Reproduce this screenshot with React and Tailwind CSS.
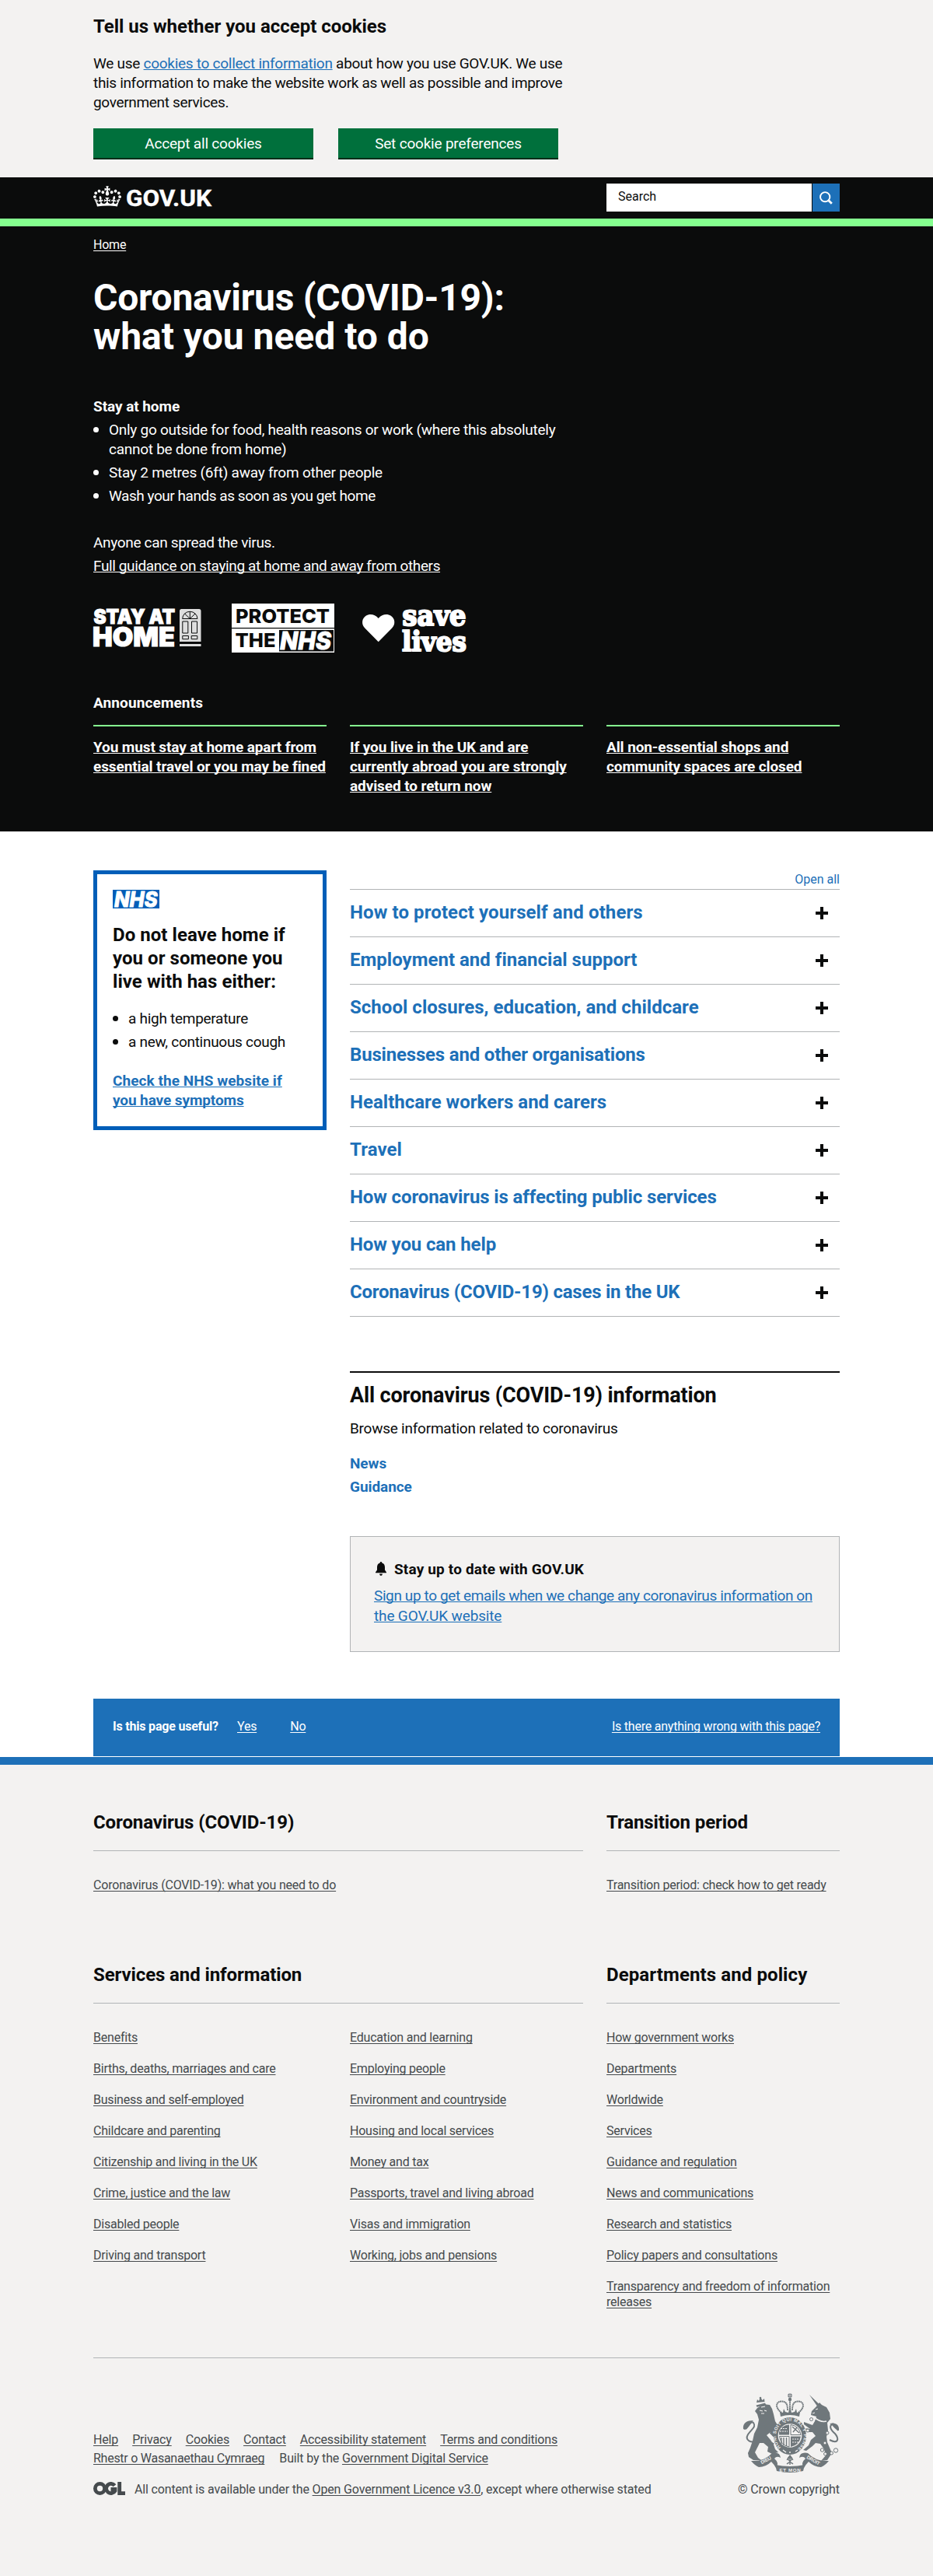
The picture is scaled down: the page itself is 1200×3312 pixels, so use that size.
import React from "react";

const ul = "underline decoration-1 [text-decoration-skip-ink:none]";
const body = "text-[19px] leading-[25px] tracking-[-0.33px]";
const bodyBold = "text-[19px] leading-[25px] font-bold tracking-[-0.06px]";
const small = "text-[16px] leading-[20px] tracking-[-0.22px]";
const footLink = "underline decoration-1 underline-offset-2 [text-decoration-skip-ink:none]";

function Crown() {
  return (
    <svg className="mt-[11px] h-[27px] w-[36px]" viewBox="0 0 132 97" fill="currentColor">
      <path d="M25 30.2c3.5 1.5 7.7-.2 9.1-3.7 1.5-3.6-.2-7.8-3.9-9.2-3.6-1.4-7.6.3-9.1 3.9-1.4 3.5.3 7.5 3.9 9zM9 39.5c3.6 1.5 7.8-.2 9.2-3.7 1.5-3.6-.2-7.8-3.9-9.1-3.6-1.5-7.6.2-9.1 3.8-1.4 3.5.3 7.5 3.8 9zM4.4 57.2c3.5 1.5 7.7-.2 9.1-3.8 1.5-3.6-.2-7.7-3.9-9.1-3.5-1.5-7.6.3-9.1 3.8-1.4 3.5.3 7.6 3.9 9.1zm38.3-21.4c3.5 1.5 7.7-.2 9.1-3.8 1.5-3.6-.2-7.7-3.9-9.1-3.6-1.5-7.6.3-9.1 3.8-1.3 3.6.4 7.7 3.9 9.1zm64.4-5.6c-3.6 1.5-7.8-.2-9.1-3.7-1.5-3.6.2-7.8 3.8-9.2 3.6-1.4 7.7.3 9.2 3.9 1.3 3.5-.4 7.5-3.9 9zm15.9 9.3c-3.6 1.5-7.7-.2-9.1-3.7-1.5-3.6.2-7.8 3.7-9.1 3.6-1.5 7.7.2 9.2 3.8 1.5 3.5-.3 7.5-3.8 9zm4.7 17.7c-3.6 1.5-7.8-.2-9.2-3.8-1.5-3.6.2-7.7 3.9-9.1 3.6-1.5 7.7.3 9.2 3.8 1.3 3.5-.4 7.6-3.9 9.1zM89.3 35.8c-3.6 1.5-7.8-.2-9.2-3.8-1.4-3.6.2-7.7 3.9-9.1 3.6-1.5 7.7.3 9.2 3.8 1.4 3.6-.3 7.7-3.9 9.1zM69.7 17.7l8.9 4.7V9.3l-8.9 2.8c-.2-.3-.5-.6-.9-.9L72.4 0H59.6l3.5 11.2c-.3.3-.6.5-.9.9l-8.8-2.8v13.1l8.8-4.7c.3.3.6.7.9.9l-5 15.4v.1c-.2.8-.4 1.6-.4 2.4 0 4.1 3.1 7.5 7 8.1h.2c.3 0 .7.1 1 .1.4 0 .7 0 1-.1h.2c4-.6 7.1-4.1 7.1-8.1 0-.8-.1-1.7-.4-2.4V34l-5.1-15.4c.4-.2.7-.6 1-.9zM66 92.8c16.9 0 32.8 1.1 47.1 3.2 4-16.9 8.9-26.7 14-33.5l-9.6-3.4c1 4.9 1.1 7.2 0 10.2-1.5-1.4-3-4.3-4.2-8.7L108.6 76c2.8-2 5-3.2 7.5-3.3-4.4 9.4-10 11.9-13.6 11.2-4.3-.8-6.3-4.6-5.6-7.9 1-4.7 5.7-5.9 8-.5 4.3-8.7-3-11.4-7.6-8.8 7.1-7.2 7.9-13.5 2.1-21.1-8 6.1-8.1 12.3-4.5 20.8-4.7-5.4-12.1-2.5-9.5 6.2 3.4-5.2 7.9-2 7.2 3.1-.6 4.3-6.4 7.8-13.5 7.2-10.3-.9-10.9-8-11.2-13.8 2.5-.5 7.1 1.8 11 7.3L80.2 60c-4.1 4.4-8 5.3-12.3 5.4 1.4-4.4 8-11.6 8-11.6H55.5s6.4 7.2 7.9 11.6c-4.2-.1-8-1-12.3-5.4l1.4 16.4c3.9-5.5 8.5-7.7 10.9-7.3-.3 5.8-.9 12.8-11.1 13.8-7.2.6-12.9-2.9-13.5-7.2-.7-5 3.8-8.3 7.1-3.1 2.7-8.7-4.6-11.6-9.4-6.2 3.7-8.5 3.6-14.7-4.6-20.8-5.8 7.6-5 13.9 2.2 21.1-4.7-2.6-11.9.1-7.7 8.8 2.3-5.5 7.1-4.2 8.1.5.7 3.3-1.3 7.1-5.7 7.9-3.5.7-9-1.8-13.5-11.2 2.5.1 4.7 1.3 7.5 3.3l-4.7-15.4c-1.2 4.4-2.7 7.2-4.3 8.7-1.1-3-.9-5.3 0-10.2l-9.5 3.4c5 6.9 9.9 16.7 14 33.5 14.8-2.1 30.8-3.2 47.7-3.2z" />
    </svg>
  );
}

function StayAtHome() {
  return (
    <svg className="mt-[7px] h-[48px] w-[139px] overflow-visible" viewBox="0 0 139 48" fontFamily="Inter, sans-serif" fontWeight="900">
      <g fill="#fff" stroke="#fff" strokeWidth="1.1">
        <text x="0.5" y="19" fontSize="25.5" textLength="104.5" lengthAdjust="spacingAndGlyphs">STAY AT</text>
        <text x="-1" y="47.700" fontSize="34" textLength="106" lengthAdjust="spacingAndGlyphs">HOME</text>
      </g>
      <path d="M111 42V2.5Q111 0 113.5 0H136Q138.5 0 138.5 2.5V42ZM111 45h27.5v3H111Z" fill="#dedede" />
      <g fill="none" stroke="#0b0c0c" strokeWidth="1">
        <path d="M114.7 12.5a9.6 9.2 0 0 1 19.2 0ZM124.3 3.5v9M124.3 12.5 117.5 6M124.3 12.5 131 6" />
        <path d="M114.8 16h7v15h-7zM126.5 16h7v15h-7zM114.8 34.5h7.6v4.2h-7.6zM126.2 34.5h7.6v4.2h-7.6z" />
      </g>
    </svg>
  );
}

function ProtectNhs() {
  return (
    <svg className="ml-[39px] h-[63px] w-[132px]" viewBox="0 0 132 63" fontFamily="Inter, sans-serif" fontWeight="800">
      <path d="M0 0h132v63H0z" fill="#fff" />
      <path d="M0 31h132v1.2H0zM61 34h70v27.6H61z" fill="#0b0c0c" />
      <g fill="#0b0c0c">
        <text x="5" y="24.7" fontSize="25" textLength="121" lengthAdjust="spacingAndGlyphs">PROTECT</text>
        <text x="4.5" y="56" fontSize="25" textLength="52" lengthAdjust="spacingAndGlyphs">THE</text>
      </g>
      <text x="62" y="59" fontSize="31.5" fontStyle="italic" fill="#fff" stroke="#fff" strokeWidth="0.9" textLength="66" lengthAdjust="spacingAndGlyphs">NHS</text>
    </svg>
  );
}

function SaveLives() {
  return (
    <svg className="ml-[36px] mt-[5px] h-[58px] w-[135px] overflow-visible" viewBox="0 0 135 58">
      <path d="M20.700 44.200 3.200 26.600C-1.600 21.400-.6 14 4.600 10.700 9.600 7.600 16.400 8.800 20.700 14 25 8.800 31.800 7.600 36.800 10.700 42 14 43 21.400 38.200 26.600Z" fill="#fff" />
      <g fill="#fff" stroke="#fff" strokeWidth="2.200" strokeLinejoin="round" fontFamily="'DejaVu Serif', serif" fontWeight="700">
        <text x="51.500" y="22.800" fontSize="37.500" textLength="82" lengthAdjust="spacingAndGlyphs">save</text>
        <text x="51" y="56" fontSize="36" textLength="83" lengthAdjust="spacingAndGlyphs">lives</text>
      </g>
    </svg>
  );
}

function NhsLogo() {
  return (
    <svg className="h-[24px] w-[60px]" viewBox="0 0 60 24">
      <path d="M0 0h60v24H0z" fill="#005eb8" />
      <text x="2" y="21.800" fontSize="27" fontFamily="Inter, sans-serif" fontWeight="800" fontStyle="italic" fill="#fff" stroke="#fff" strokeWidth="0.9" textLength="55.500" lengthAdjust="spacingAndGlyphs">NHS</text>
    </svg>
  );
}

function Crest() {
  const g = "#6f777b";
  const l = "#f3f2f1";
  return (
    <svg className="h-[102px] w-[125px] overflow-visible" viewBox="0 0 125 102">
      <defs>
        <path id="garter" d="M61 74.500A18 19.500 0 1 1 61.100 74.500" />
      </defs>
      {/* tails */}
      <path d="M22 60C10 66 3 60 7 53 12 46 18 43 14 38 11 35 8 42 4 46" fill="none" stroke={g} strokeWidth="2" />
      <path d="M1 46C0 38 6 35 14 35 10 38 9 44 3 47Z" fill={g} />
      <path d="M112 60C124 66 124 58 119 52 112 46 112 42 115 40 118 38 120 44 123 48" fill="none" stroke={g} strokeWidth="2" />
      <path d="M124 48C125 41 120 37 112 39 117 41 117 46 124 48Z" fill={g} />
      {/* lion */}
      <path d="M17.500 15.500 29 12.500l1.300 2.500-11.800 2.800ZM18 12l1-4 2 2 2-5 2.500 4 2.500-2 .5 4Z" fill={g} />
      <circle cx="23" cy="6" r="1.300" fill={g} />
      <path d="M19 19 27 14 35 15 38 20 40 27 42 36 47 44 44 46 49 52 43 52 46 58 40 57 36 50 31 54 36 60 40 66 42 72 46 76 38 78 32 75 33 69 27 64 22 64 19 70 16 76 20 83 24 86 14 86 8 82 7 77 10 70 13 61 15 52 19 44 21 34 19 27 16 23Z" fill={g} />
      <path d="m24 18 5-1M22 22l4 1M28 22l3 1M24 26h4" stroke={l} strokeWidth="1.100" />
      <path d="m46 44-6-6M36 50l9 9M40 66l-8-4M15 75l-7 3" stroke={g} strokeWidth="3.500" fill="none" />
      {/* unicorn */}
      <path d="M86 2 98.500 14 96 16.500Z" fill={g} />
      <path d="M95 17 99 12 102 15 108 18 112 25 113 33 109 38 110 48 108 56 109 63 112 70 115 77 109 86 101 87 107 80 105 72 100 65 94 64 90 68 82 74 78 73 85 67 88 60 94 55 90 50 84 50 80 45 87 46 79 40 79 37 90 41 93 36 95 30 88 28 89 23Z" fill={g} />
      <path d="M92 31q9 7 16 5" fill="none" stroke={l} strokeWidth="1.600" />
      <path d="m94 21 3-1M90 26l3-1" stroke={l} strokeWidth="1" />
      <g fill={l} stroke={g} strokeWidth="1">
        <circle cx="88.500" cy="33.500" r="2" />
        <circle cx="84" cy="48" r="2" />
        <circle cx="109" cy="51" r="2" />
        <circle cx="106" cy="64" r="2" />
        <circle cx="102.500" cy="73" r="2.200" />
        <circle cx="106.500" cy="78" r="2" />
        <circle cx="114.500" cy="77" r="2" />
        <circle cx="120" cy="73.500" r="2.700" />
      </g>
      {/* crown */}
      <circle cx="61" cy="3" r="2.800" fill={g} />
      <path d="M61 0v8M58 3h6" stroke={l} strokeWidth="0.600" />
      <circle cx="61" cy="8" r="2.200" fill={g} />
      <path d="M50 25C41 18 43 10 51 10.500 56 11 58 14 58 22M72 25C81 18 79 10 71 10.500 66 11 64 14 64 22M61 9V22" fill="none" stroke={g} strokeWidth="1.900" strokeDasharray="1.800 0.500" />
      <path d="M49 30 48 24 52 25 53 20 55 24 59 25 61 17 63 25 67 24 69 20 70 25 74 24 73 30Q61 26 49 30Z" fill={g} />
      {/* garter and shield */}
      <ellipse cx="61" cy="55" rx="21" ry="24" fill={g} />
      <text fill={l} fontFamily="'Liberation Sans', sans-serif" fontWeight="700" fontSize="5.800">
        <textPath href="#garter" startOffset="13" textLength="94">HONI SOIT QUI MAL Y PENSE</textPath>
      </text>
      <circle cx="61" cy="54.500" r="15.300" fill={l} />
      <path d="M47 53.500V50Q50 41 60 40.500V53.500ZM62 55.500H75Q73 67 62 69Z" fill={g} />
      <path d="M62 53.500V40.500Q73 42 75 53.500ZM60 55.500V69Q49 67 47.500 55.500Z" fill="none" stroke={g} strokeWidth="1" />
      <path d="m64 43 9 8M65 50l5-6M50 57v8M53 57v10M56.500 57v11" stroke={g} strokeWidth="1.400" />
      <path d="M49 45.500h9M48 49h10M64 59h9M64 63h8" stroke={l} strokeWidth="1.100" strokeDasharray="2 1" />
      <path d="m52 73 4 3M61 77v-2M68 75l3-2" stroke={l} strokeWidth="1.400" />
      {/* motto ribbon */}
      <path d="M61 80v12M57 86q4-6 8 0M57 91q4-4 8 0M61 80l3 4-3 4-3-4Z" fill="none" stroke={g} strokeWidth="1.300" />
      <path d="M11 87Q28 88 38 77 48 75 49 83 44 80 41 84 48 90 43 96 41 92 37 88 30 95 21 95 16 93 11 87Z" fill={g} />
      <path d="M111 87Q94 88 84 77 74 75 73 83 78 80 81 84 74 90 79 96 81 92 85 88 92 95 101 95 106 93 111 87Z" fill={g} />
      <path d="M42 92Q61 96 80 92L78 100Q61 104 44 100Z" fill={g} />
      <g fill={l} fontFamily="'Liberation Sans', sans-serif" fontWeight="700" fontSize="6.200" textAnchor="middle">
        <text transform="translate(31 88) rotate(-28)">DIEU</text>
        <text x="61" y="100.500" textLength="27">ET MON</text>
        <text transform="translate(90 88) rotate(30)">DROIT</text>
      </g>
    </svg>
  );
}

const announcements = [
  ["You must stay at home apart from", "essential travel or you may be fined"],
  ["If you live in the UK and are", "currently abroad you are strongly", "advised to return now"],
  ["All non-essential shops and", "community spaces are closed"],
];

const sections = [
  ["How to protect yourself and others", "tracking-[0.1px]"],
  ["Employment and financial support", "tracking-[0.01px]"],
  ["School closures, education, and childcare", "tracking-[0.03px]"],
  ["Businesses and other organisations", "tracking-[-0.18px]"],
  ["Healthcare workers and carers", "tracking-[0.01px]"],
  ["Travel", "tracking-[0.1px]"],
  ["How coronavirus is affecting public services", "tracking-[-0.12px]"],
  ["How you can help", "tracking-[-0.12px]"],
  ["Coronavirus (COVID-19) cases in the UK", "tracking-[-0.22px]"],
];

const services = [
  "Benefits", "Births, deaths, marriages and care", "Business and self-employed", "Childcare and parenting",
  "Citizenship and living in the UK", "Crime, justice and the law", "Disabled people", "Driving and transport",
];
const services2 = [
  "Education and learning", "Employing people", "Environment and countryside", "Housing and local services",
  "Money and tax", "Passports, travel and living abroad", "Visas and immigration", "Working, jobs and pensions",
];
const departments = [
  "How government works", "Departments", "Worldwide", "Services", "Guidance and regulation",
  "News and communications", "Research and statistics", "Policy papers and consultations",
  "Transparency and freedom of information releases",
];

function Bullets({ items }) {
  return (
    <ul className="flex flex-col gap-[5px] text-[19px] leading-[25px]">
      {items.map(([tracking, ...lines]) => (
        <li key={lines[0]} className={`flex items-start gap-[13px] ${tracking}`}>
          <span className="mt-[9px] size-[7px] shrink-0 rounded-full bg-current" />
          <span className="whitespace-nowrap">
            {lines.map((t) => <span key={t} className="block">{t}</span>)}
          </span>
        </li>
      ))}
    </ul>
  );
}

function FooterHeading({ children }) {
  return (
    <h2 className="h-[52px] border-b border-[#b1b4b6] text-[24px] leading-[30px] font-bold tracking-[-0.1px] text-[#0b0c0c]">
      {children}
    </h2>
  );
}

function LinkList({ items }) {
  return (
    <ul className="mt-[34px] flex w-[300px] flex-col gap-[20px]">
      {items.map((t) => <li key={t}><a href="#" className={footLink}>{t}</a></li>)}
    </ul>
  );
}

export default function App() {
  return (
    <div className="h-[3312px] w-[1200px] overflow-hidden bg-white font-['Roboto',sans-serif] text-[#0b0c0c]">
      <section className="h-[228px] bg-[#f3f2f1] px-[120px] pt-[19px]">
        <h2 className="text-[24px] leading-[30px] font-bold tracking-[-0.02px]">Tell us whether you accept cookies</h2>
        <p className="mt-5 text-[19px] leading-[25px] tracking-[-0.33px] whitespace-nowrap">
          <span className="tracking-[-0.27px]">We use <a href="#" className={`text-[#1d70b8] underline-offset-1 ${ul}`}>cookies to collect information</a> about how you use GOV.UK. We use</span>
          <br />this information to make the website work as well as possible and improve
          <br />government services.
        </p>
        <div className="mt-[21px] flex gap-[32px]">
          {["Accept all cookies", "Set cookie preferences"].map((t) => (
            <button key={t} className="h-[40px] w-[283px] border-b-2 border-[#002d18] bg-[#00703c] text-[19px] leading-[25px] tracking-[-0.2px] text-white">{t}</button>
          ))}
        </div>
      </section>

      <div className="bg-[#0b0c0c] text-white">
        <header className="flex h-[53px] justify-between px-[120px]">
          <a href="#" className="flex gap-[7px]">
            <Crown />
            <svg className="mt-[12px] h-[30px] w-[110px] overflow-visible" viewBox="0 0 110 30">
              <text x="-1" y="25.300" fontSize="30" fontWeight="700" fontFamily="Roboto, sans-serif" fill="currentColor" stroke="currentColor" strokeWidth="0.400" textLength="110" lengthAdjust="spacingAndGlyphs">GOV.UK</text>
            </svg>
          </a>
          <div className="mt-2 flex h-[36px] gap-px">
            <div className="w-[264px] bg-white pl-[15px] text-[16px] leading-[34px] text-[#0b0c0c]">Search</div>
            <button className="flex w-[35px] items-center justify-center bg-[#1d70b8]">
              <svg className="size-[17px]" viewBox="0 0 17 17" fill="none" stroke="#fff">
                <circle cx="7.200" cy="7.200" r="6.100" strokeWidth="1.900" />
                <path d="m11.500 11.500 4.300 4.300" strokeWidth="2.800" />
              </svg>
            </button>
          </div>
        </header>
        <div className="h-[10px] bg-[#85ff8f]" />

        <div className="h-[778px] px-[120px] pt-[14px]">
          <a href="#" className={`block w-fit ${small} ${footLink}`}>Home</a>
          <h1 className="mt-[33px] text-[48px] leading-[50px] font-bold tracking-[-0.25px]">
            Coronavirus (COVID-19):<br /><span className="tracking-[-0.02px]">what you need to do</span>
          </h1>
          <h2 className={`mt-[52px] ${bodyBold}`}>Stay at home</h2>
          <div className="mt-[5px]">
            <Bullets
              items={[
                ["tracking-[-0.27px]", "Only go outside for food, health reasons or work (where this absolutely", "cannot be done from home)"],
                ["tracking-[-0.22px]", "Stay 2 metres (6ft) away from other people"],
                ["tracking-[-0.46px]", "Wash your hands as soon as you get home"],
              ]}
            />
          </div>
          <p className={`mt-[35px] ${body}`}>Anyone can spread the virus.</p>
          <p className="mt-[5px] text-[19px] leading-[25px] tracking-[-0.38px]">
            <a href="#" className={`underline-offset-1 ${ul}`}>Full guidance on staying at home and away from others</a>
          </p>
          <div className="mt-[36px] flex items-start">
            <StayAtHome />
            <ProtectNhs />
            <SaveLives />
          </div>
          <h2 className="mt-[52px] text-[19px] leading-[25px] font-bold tracking-[0.12px]">Announcements</h2>
          <div className="mt-[16px] grid grid-cols-3 gap-[30px]">
            {announcements.map((lines) => (
              <a key={lines[0]} href="#" className="border-t-2 border-[#85ff8f] pt-[14px] text-[19px] leading-[25px] font-bold tracking-[-0.1px] whitespace-nowrap">
                {lines.map((t) => <span key={t} className={`block w-fit underline-offset-1 ${ul}`}>{t}</span>)}
              </a>
            ))}
          </div>
        </div>
      </div>

      <main className="flex h-[1115px] items-start gap-[30px] px-[120px] pt-[50px]">
        <aside className="h-[334px] w-[300px] shrink-0 border-[5px] border-[#005eb8] px-[20px] pt-[20px]">
          <NhsLogo />
          <h2 className="mt-[19px] text-[24px] leading-[30px] font-bold tracking-[0.05px]">
            Do not leave home if<br />you or someone you<br />live with has either:
          </h2>
          <div className="mt-[20px]">
            <Bullets items={[["tracking-[-0.28px]", "a high temperature"], ["tracking-[-0.28px]", "a new, continuous cough"]]} />
          </div>
          <a href="#" className={`mt-[25px] block text-[19px] leading-[25px] font-bold tracking-[0.06px] text-[#1d70b8] underline-offset-1 ${ul}`}>
            Check the NHS website if<br /><span className="tracking-[-0.1px]">you have symptoms</span>
          </a>
        </aside>

        <div className="w-[630px]">
          <div className="pt-[2px] pb-[2px] text-right text-[16px] leading-[20px] text-[#1d70b8]">Open all</div>
          <div className="border-b border-[#b1b4b6]">
            {sections.map(([t, tracking]) => (
              <div key={t} className="flex h-[61px] justify-between border-t border-[#b1b4b6] pr-[15px]">
                <h3 className={`pt-[14px] text-[24px] leading-[30px] font-bold text-[#1d70b8] ${tracking}`}>{t}</h3>
                <svg className="mt-[22px] size-[16px]" viewBox="0 0 16 16" fill="#0b0c0c">
                  <path d="M6 0h4v6h6v4h-6v6H6v-6H0V6h6z" />
                </svg>
              </div>
            ))}
          </div>

          <div className="mt-[70px] border-t-2 border-[#0b0c0c] pt-[14px]">
            <h2 className="text-[27px] leading-[30px] font-bold tracking-[-0.14px]">All coronavirus (COVID-19) information</h2>
            <p className="mt-[15px] text-[19px] leading-[25px] tracking-[-0.24px]">Browse information related to coronavirus</p>
            <ul className={`mt-[20px] flex flex-col gap-[5px] text-[#1d70b8] ${bodyBold}`}>
              <li>News</li>
              <li>Guidance</li>
            </ul>
          </div>

          <div className="mt-[51px] h-[149px] border border-[#b1b4b6] bg-[#f3f2f1] px-[30px] pt-[29px]">
            <div className="flex gap-[10px]">
              <svg className="mt-[3px] ml-[2px] h-[18px] w-[14px]" viewBox="0 0 14 18" fill="#0b0c0c">
                <path d="M7 0C7.900 0 8.300.5 8.300 1.500 11 2.300 12 4.500 12 7v3.500L14 13.500V14.300H0V13.500L2 10.500V7C2 4.500 3 2.300 5.700 1.500 5.700.5 6.100 0 7 0ZM5 15.600H9Q8.800 18 7 18T5 15.600Z" />
              </svg>
              <h2 className="text-[19px] leading-[25px] font-bold tracking-[0.17px]">Stay up to date with GOV.UK</h2>
            </div>
            <a href="#" className={`mt-[9px] block text-[19px] leading-[26px] tracking-[-0.39px] whitespace-nowrap text-[#1d70b8] underline-offset-1 ${ul}`}>
              Sign up to get emails when we change any coronavirus information on
              <br /><span className="tracking-[-0.15px]">the GOV.UK website</span>
            </a>
          </div>
        </div>
      </main>

      <div className={`mx-[120px] flex h-[74px] bg-[#1d70b8] px-[25px] pt-[26px] text-white ${small}`}>
        <h2 className="w-[160px] font-bold tracking-[-0.2px]">Is this page useful?</h2>
        <a href="#" className={`w-fit ${footLink}`}>Yes</a>
        <a href="#" className={`ml-[43px] ${footLink}`}>No</a>
        <a href="#" className={`ml-auto ${footLink}`}>Is there anything wrong with this page?</a>
      </div>

      <footer className={`mt-px h-[1053px] border-t-[10px] border-[#1d70b8] bg-[#f3f2f1] px-[120px] pt-[59px] text-[#454a4d] ${small}`}>
        <div className="grid grid-cols-[630px_300px] gap-x-[30px]">
          <div className="h-[196px]">
            <FooterHeading>Coronavirus (COVID-19)</FooterHeading>
            <div className="mt-[34px]"><a href="#" className={`tracking-[-0.19px] ${footLink}`}>Coronavirus (COVID-19): what you need to do</a></div>
          </div>
          <div className="h-[196px]">
            <FooterHeading>Transition period</FooterHeading>
            <div className="mt-[34px]"><a href="#" className={footLink}>Transition period: check how to get ready</a></div>
          </div>
          <div>
            <FooterHeading>Services and information</FooterHeading>
            <div className="flex gap-[30px]">
              <LinkList items={services} />
              <LinkList items={services2} />
            </div>
          </div>
          <div>
            <h2 className="h-[52px] border-b border-[#b1b4b6] text-[24px] leading-[30px] font-bold tracking-[0.1px] text-[#0b0c0c]">Departments and policy</h2>
            <LinkList items={departments} />
          </div>
        </div>

        <div className="mt-[61px] flex h-[180px] items-end justify-between border-t border-[#b1b4b6] tracking-[-0.16px]">
          <div>
            <div className="flex gap-[18px] leading-[24px]">
              {["Help", "Privacy", "Cookies", "Contact", "Accessibility statement", "Terms and conditions"].map((t) => (
                <a key={t} href="#" className={footLink}>{t}</a>
              ))}
            </div>
            <div className="flex gap-[19px] leading-[24px]">
              <a href="#" className={`tracking-[-0.26px] ${footLink}`}>Rhestr o Wasanaethau Cymraeg</a>
              <span>Built by the <a href="#" className={footLink}>Government Digital Service</a></span>
            </div>
            <div className="mt-[18px] flex gap-[12px]">
              <svg className="h-[17px] w-[41px]" viewBox="0 0 41 17" fill="none" stroke="#454a4d" strokeWidth="4.800">
                <circle cx="8.500" cy="8.500" r="6.100" />
                <path d="M27.500 4.700A6.100 6.100 0 1 0 28 11.500V9.500H22.500M33.700 0V14.600H41" />
              </svg>
              <span>All content is available under the <a href="#" className={footLink}>Open Government Licence v3.0</a>, except where otherwise stated</span>
            </div>
          </div>
          <div className="flex flex-col items-end gap-[12px]">
            <Crest />
            <a href="#" className="tracking-[-0.08px]">© Crown copyright</a>
          </div>
        </div>
      </footer>
    </div>
  );
}
